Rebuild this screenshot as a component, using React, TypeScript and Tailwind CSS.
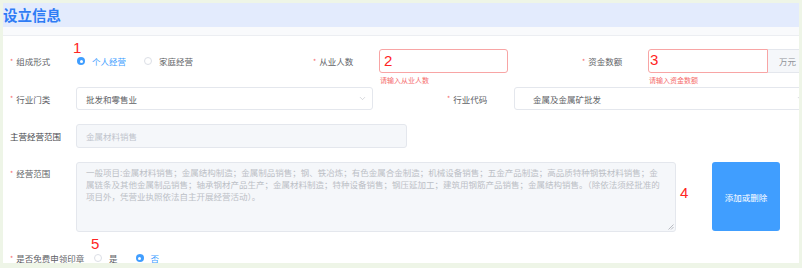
import { ChevronDown } from "lucide-react";

const cjk = { fontFamily: '"Noto Sans CJK SC", "Noto Sans", sans-serif' };

const Label = ({
  text,
  required = true,
  width = "w-[66px]",
  dark = false,
}: {
  text: string;
  required?: boolean;
  width?: string;
  dark?: boolean;
}) => (
  <div className={`flex shrink-0 items-center ${width}`}>
    {required && (
      <span className="mr-[3px] text-[7px] leading-none text-[#f56c6c]">*</span>
    )}
    <span
      className={`text-[8.5px] leading-[12px] ${dark ? "text-[#45474c]" : "text-[#606266]"}`}
    >
      {text}
    </span>
  </div>
);

const Radio = ({ label, checked }: { label: string; checked?: boolean }) => (
  <div className="flex items-center gap-[7px]">
    {checked ? (
      <span className="flex size-[8px] items-center justify-center rounded-full bg-[#409eff]">
        <span className="size-[3px] rounded-full bg-white" />
      </span>
    ) : (
      <span className="size-[8px] rounded-full border border-[#dcdfe6] bg-white" />
    )}
    <span
      className={`text-[8.5px] leading-[12px] ${checked ? "text-[#409eff]" : "text-[#606266]"}`}
    >
      {label}
    </span>
  </div>
);

const Select = ({
  value,
  width,
  pad = "pl-[9px]",
}: {
  value: string;
  width: string;
  pad?: string;
}) => (
  <div
    className={`flex h-full shrink-0 items-center justify-between rounded-[3px] border border-[#e4e7ed] bg-white pr-[5px] ${pad} ${width}`}
  >
    <span className="text-[8.5px] leading-[12px] text-[#606266]">{value}</span>
    <ChevronDown size={9} strokeWidth={1.4} className="text-[#b4b8bf]" />
  </div>
);

const Note = ({ n, className }: { n: string; className: string }) => (
  <span
    className={`absolute text-[15px] leading-none text-[#ff2424] ${className}`}
    style={{ fontFamily: '"Liberation Sans", Arial, sans-serif' }}
  >
    {n}
  </span>
);

export default function App() {
  return (
    <div className="h-[268px] w-[802px] bg-[#eef5e7] pl-[3px] pt-[3px]" style={cjk}>
      <div className="relative flex h-[260px] w-[796px] flex-col overflow-hidden bg-white">
        {/* header */}
        <div className="flex h-[24px] shrink-0 items-center bg-[#e3ebfd]">
          <span className="text-[14.5px] font-bold leading-none text-[#2f7cf5]">设立信息</span>
        </div>
        <div className="h-[9px] shrink-0 border-b border-[#eceef2] bg-[#f9fafc]" />

        <div className="flex flex-col pl-[7px] pt-[13px]">
          {/* row 1 */}
          <div className="flex h-[24px] items-center">
            <Label text="组成形式" />
            <div className="flex w-[237px] shrink-0 items-center gap-[18px] pl-[1px]">
              <Radio label="个人经营" checked />
              <Radio label="家庭经营" />
            </div>
            <Label text="从业人数" />
            <div className="relative h-full w-[129px] shrink-0 rounded-[3px] border border-[#f8a5a5] bg-white">
              <span className="absolute left-0 top-[27px] whitespace-nowrap text-[7px] leading-none text-[#f56c6c]">
                请输入从业人数
              </span>
            </div>
            <div className="w-[74px] shrink-0" />
            <Label text="资金数额" />
            <div className="relative h-full w-[120px] shrink-0 rounded-l-[3px] border border-[#f8a5a5] bg-white">
              <span className="absolute left-0 top-[27px] whitespace-nowrap text-[7px] leading-none text-[#f56c6c]">
                请输入资金数额
              </span>
            </div>
            <div className="flex h-full w-[40px] shrink-0 items-center border-y border-r border-[#e4e7ed] bg-[#f5f7fa] pl-[11px]">
              <span className="text-[8.5px] leading-[12px] text-[#909399]">万元</span>
            </div>
          </div>

          {/* row 2 */}
          <div className="mt-[14px] flex h-[23px] items-center">
            <Label text="行业门类" />
            <Select value="批发和零售业" width="w-[297px]" />
            <div className="w-[74px] shrink-0" />
            <Label text="行业代码" width="w-[67px]" />
            <Select value="金属及金属矿批发" width="w-[297px]" pad="pl-[18px]" />
          </div>

          {/* row 3 */}
          <div className="mt-[14px] flex h-[24px] items-center">
            <Label text="主营经营范围" required={false} dark />
            <div className="flex h-full w-[331px] shrink-0 items-center rounded-[3px] border border-[#e4e7ed] bg-[#f5f7fa] pl-[9px]">
              <span className="text-[8.5px] leading-[12px] text-[#c0c4cc]">金属材料销售</span>
            </div>
          </div>

          {/* row 4 */}
          <div className="mt-[14px] flex h-[70px] items-start">
            <div className="pt-[5px]">
              <Label text="经营范围" />
            </div>
            <div className="relative h-full w-[600px] shrink-0 rounded-[3px] border border-[#e4e7ed] bg-[#f5f7fa] pl-[9px] pt-[4px] text-[8.5px] leading-[11.75px] text-[#bcc0c6]">
              <div className="whitespace-nowrap">
                一般项目:金属材料销售；金属结构制造；金属制品销售；钢、铁冶炼；有色金属合金制造；机械设备销售；五金产品制造；高品质特种钢铁材料销售；金
              </div>
              <div className="whitespace-nowrap">
                属链条及其他金属制品销售；轴承钢材产品生产；金属材料制造；特种设备销售；钢压延加工；建筑用钢筋产品销售；金属结构销售。（除依法须经批准的
              </div>
              <div className="whitespace-nowrap">项目外，凭营业执照依法自主开展经营活动）。</div>
              <svg
                className="absolute bottom-[1px] right-[1px]"
                width="6"
                height="6"
                viewBox="0 0 6 6"
              >
                <path d="M5.5 0.5 L0.5 5.5 M5.5 3 L3 5.5" stroke="#a8abb2" strokeWidth="0.8" />
              </svg>
            </div>
            <div className="w-[36px] shrink-0" />
            <button className="flex h-[69px] w-[68px] shrink-0 items-center justify-center rounded-[3px] bg-[#409eff] text-[8.5px] leading-[12px] text-white">
              添加或删除
            </button>
          </div>

          {/* row 5 */}
          <div className="mt-[19px] flex h-[14px] items-center">
            <Label text="是否免费申领印章" width="w-[84px]" />
            <div className="flex items-center gap-[18px]">
              <Radio label="是" />
              <Radio label="否" checked />
            </div>
          </div>
        </div>

        <Note n="1" className="left-[70px] top-[37px]" />
        <Note n="2" className="left-[381px] top-[50px]" />
        <Note n="3" className="left-[647px] top-[49px]" />
        <Note n="4" className="left-[677px] top-[182px]" />
        <Note n="5" className="left-[88px] top-[233px]" />
      </div>
    </div>
  );
}
